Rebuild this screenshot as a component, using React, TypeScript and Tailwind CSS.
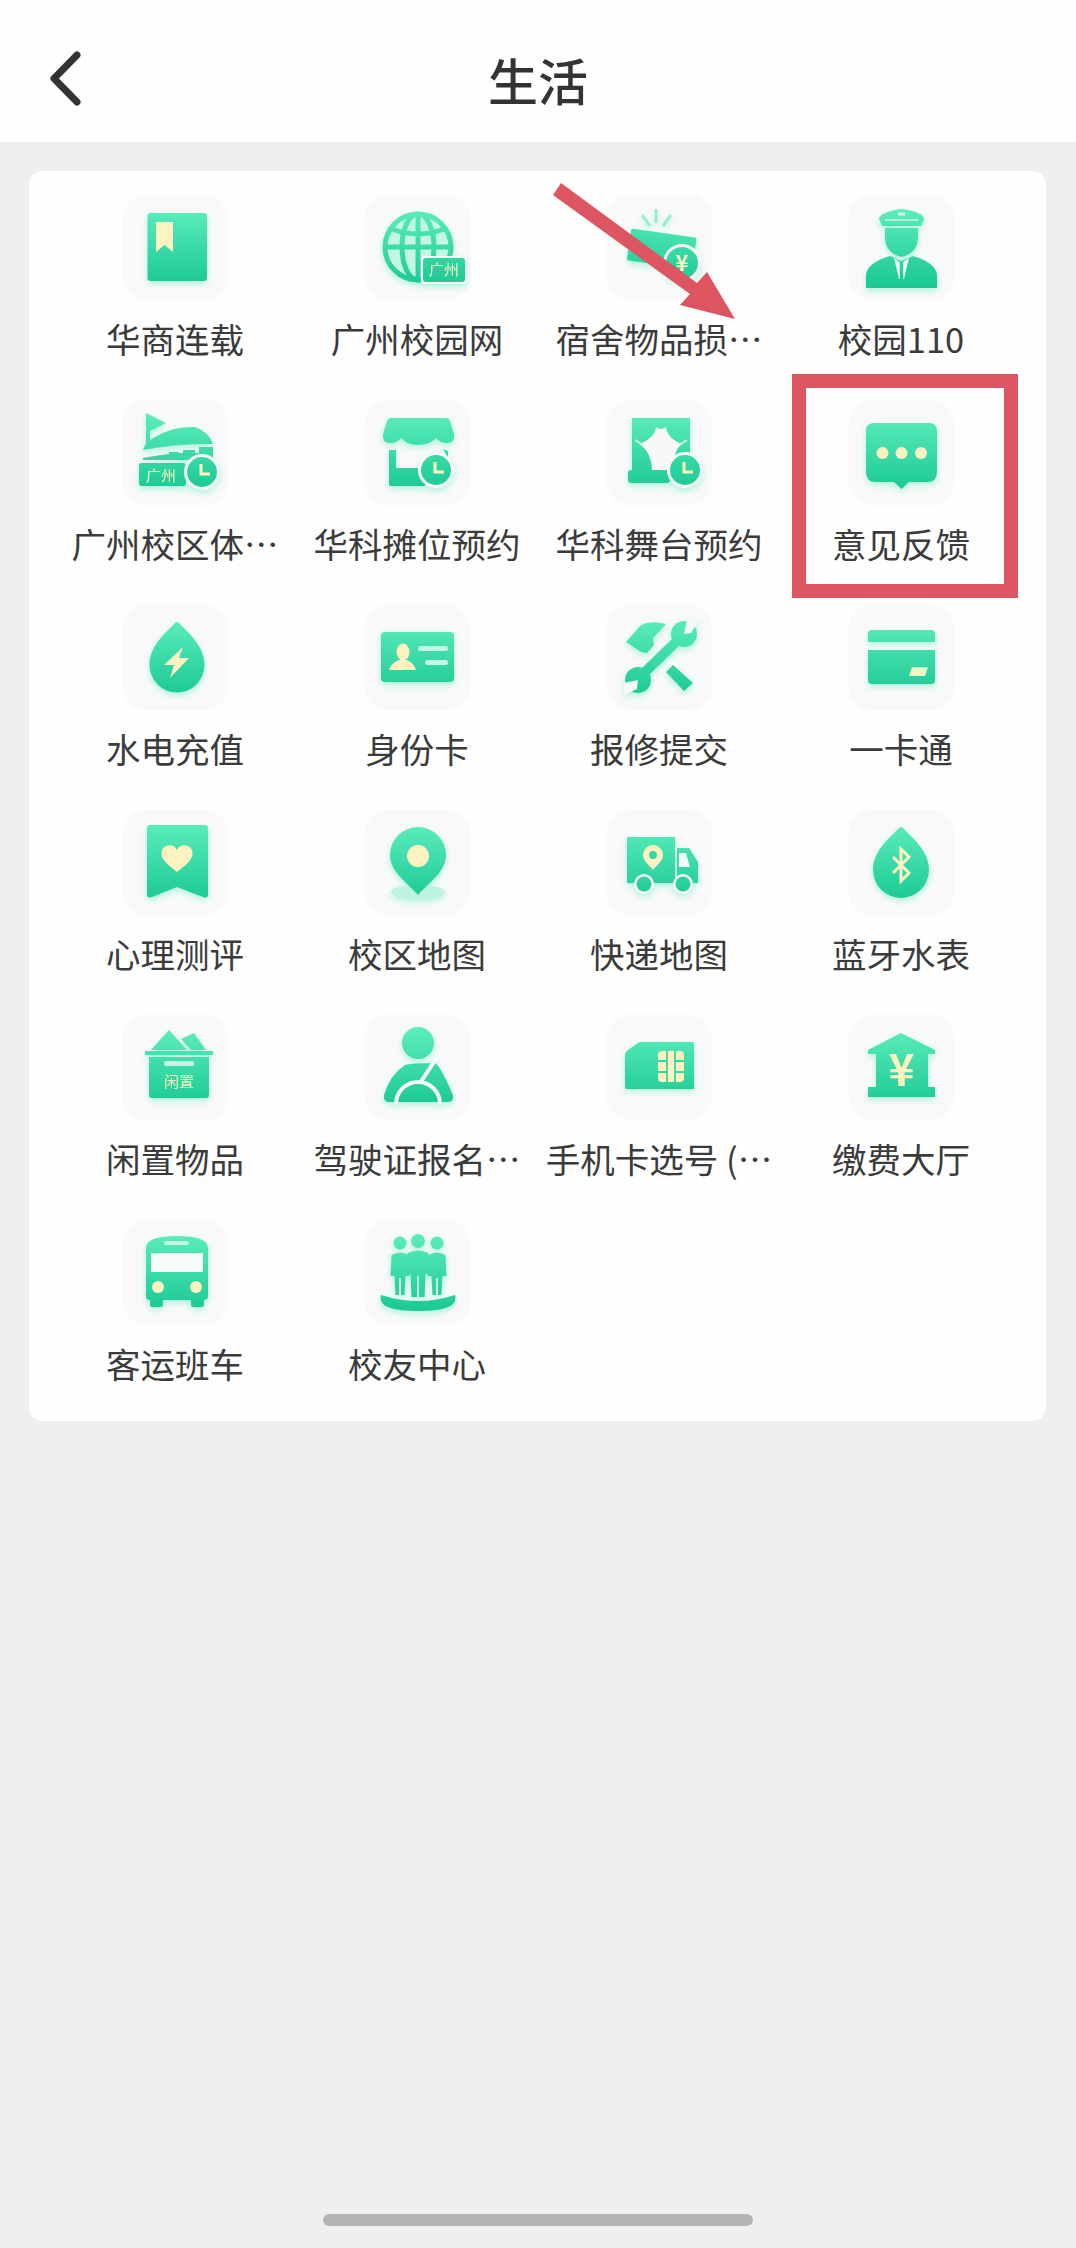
import React from "react";

const C = "#fdf3c0";
const T = "#f8f8f9";
const G = "url(#g)";
const F = '"Noto Sans CJK SC", "Noto Sans", sans-serif';

const Clock = ({ x, y, r = 15 }: { x: number; y: number; r?: number }) => (
  <g>
    <circle cx={x} cy={y} r={r + 3} fill={T} />
    <circle cx={x} cy={y} r={r} fill={G} />
    <path d={`M${x - 1} ${y - 8}V${y + 2}H${x + 8}`} fill="none" stroke={C} strokeWidth={3} />
  </g>
);

const Drop = ({ x, t, r }: { x: number; t: number; r: number }) => (
  <path
    d={`M${x - 2} ${t + 1}Q${x} ${t - 1} ${x + 2} ${t + 1}C${x + 10} ${t + 10} ${x + r} ${t + 23} ${x + r} ${t + 43}A${r} ${r} 0 0 1 ${x - r} ${t + 43}C${x - r} ${t + 23} ${x - 10} ${t + 10} ${x - 2} ${t + 1}Z`}
    fill={G}
  />
);

const Person = ({ c, t, b, w }: { c: number; t: number; b: number; w: number }) => (
  <path
    d={`M${c - w} ${t + 3}Q${c} ${t - 2} ${c + w} ${t + 3}L${c + w + 1} ${t + 24}L${c + w - 3} ${t + 24}L${c + w - 4} ${b}H${c + 1}V${t + 26}H${c - 1}V${b}H${c - w + 4}L${c - w + 3} ${t + 24}L${c - w - 1} ${t + 24}Z`}
    fill={G}
  />
);

const icons: Record<string, React.ReactNode> = {
  book: (
    <g>
      <rect x="24.5" y="18" width="59.5" height="68" rx="3" fill={G} />
      <path d="M33 27H50V57L41.5 50L33 57Z" fill={C} />
    </g>
  ),
  globe: (
    <g>
      <circle cx="53" cy="52" r="33" fill="#c5f5e3" stroke={G} strokeWidth="5" />
      <ellipse cx="53" cy="52" rx="16" ry="33" fill="none" stroke={G} strokeWidth="5" />
      <path d="M53 19V85M20 52H86M27 34Q53 44 79 34" fill="none" stroke={G} strokeWidth="5" />
      <rect x="56" y="61" width="46" height="28" rx="4" fill={T} />
      <rect x="58" y="63" width="42" height="24" rx="3" fill={G} />
      <text x="79" y="80" textAnchor="middle" fontSize="15" fill={C} fontFamily={F}>广州</text>
    </g>
  ),
  money: (
    <g>
      <path d="M49 14V28M35 20L43 31M64 20L56 31" stroke="#9bedd0" strokeWidth="3" fill="none" />
      <rect x="22" y="38" width="66" height="32" rx="2" fill={G} transform="rotate(8 55 52)" />
      <circle cx="75" cy="68" r="19" fill={T} />
      <circle cx="75" cy="68" r="16" fill={G} />
      <text x="75" y="76" textAnchor="middle" fontSize="22" fontWeight="700" fill={C} fontFamily={F}>¥</text>
    </g>
  ),
  officer: (
    <g>
      <path d="M30 24Q31 17 52.5 14Q74 17 75 24L72 31H33Z" fill={G} />
      <path d="M36 25H69" stroke="#d3f7e9" strokeWidth="1.5" />
      <path d="M49 19H56" stroke="#d3f7e9" strokeWidth="3" />
      <path d="M36 33H69V42Q69 58 52.5 62Q36 58 36 42Z" fill={G} />
      <path d="M17 93V80Q18 68 41 61L52.5 66L64 61Q87 68 88 80V93Z" fill={G} />
      <path d="M45 63L52.5 68L60 63L55 84H50Z" fill="#eafbf4" />
      <path d="M52.5 67V84" stroke={G} strokeWidth="3.5" />
    </g>
  ),
  stadium: (
    <g>
      <path d="M23 13L43 23L27 31V44H23Z" fill={G} />
      <path d="M20 50Q22 42 32 37Q50 26 72 27Q86 32 90 44Q55 43 20 50Z" fill={G} />
      <path d="M20 58Q40 54 58 53H90V60H20Z" fill={G} />
      <path d="M76 47H90V56H76ZM60 50H72V56H60ZM46 52H56V56H46Z" fill={G} />
      <rect x="16" y="63" width="47" height="23" rx="3" fill={G} />
      <text x="38" y="81" textAnchor="middle" fontSize="15" fill={C} fontFamily={F}>广州</text>
      <Clock x={79} y={72} />
    </g>
  ),
  shop: (
    <g>
      <path d="M26 18H81Q84 18 85 21L89 34Q90 43 82 43Q75 43 71 38Q65 45 53 45Q42 45 36 38Q32 43 25 43Q17 43 18 34L22 21Q23 18 26 18Z" fill={G} />
      <path d="M24 50H31V68H60V86H26Q24 86 24 84Z" fill={G} />
      <path d="M78 49L83 51V58Z" fill={G} />
      <Clock x={71} y={70} />
    </g>
  ),
  stage: (
    <g>
      <path d="M25 18H83V70H25Z" fill={G} />
      <path d="M49 27Q54 31 59 27Q60 38 75 44Q66 50 66 72H45Q45 52 32 44Q48 38 49 27Z" fill={T} />
      <path d="M28 40L36 45M80 40L72 45" stroke="#c5f5e3" strokeWidth="2" />
      <rect x="21" y="70" width="42" height="13" rx="3" fill={G} />
      <Clock x={78} y={70} />
    </g>
  ),
  chat: (
    <g>
      <path d="M25 23H80Q88 23 88 31V72Q88 82 78 82H60L52.5 89L45 82H27Q17 82 17 72V31Q17 23 25 23Z" fill={G} />
      <circle cx="33.5" cy="53" r="6" fill={C} />
      <circle cx="52.5" cy="53" r="6" fill={C} />
      <circle cx="72" cy="53" r="6" fill={C} />
    </g>
  ),
  bolt: (
    <g>
      <Drop x={54} t={17} r={27.5} />
      <path d="M60 42L41 60H51L47 73L66 53H56Z" fill={C} />
    </g>
  ),
  id: (
    <g>
      <rect x="16" y="27" width="73" height="50" rx="4" fill={G} />
      <ellipse cx="38" cy="47" rx="6.5" ry="8.5" fill={C} />
      <path d="M24 65Q26 58 34 55H42Q49 58 51 65Z" fill={C} />
      <rect x="53" y="41" width="30" height="5" rx="2.5" fill="#c5f5e3" />
      <rect x="60" y="55" width="23" height="5" rx="2.5" fill="#c5f5e3" />
    </g>
  ),
  tools: (
    <g>
      <path d="M19 37L34 20Q44 15 59 19L46 33L47 40L40 48L34 47Z" fill={G} />
      <path d="M66 60L86 78L77 86L59 67Z" fill={G} />
      <path d="M38 67L70 36" stroke={G} strokeWidth="10" />
      <circle cx="77" cy="29" r="13" fill={G} />
      <path d="M77 29L80 15H92L84 28Z" fill={T} />
      <circle cx="31" cy="75" r="13" fill={G} />
      <path d="M31 75L17 78V90L30 84Z" fill={T} />
    </g>
  ),
  card: (
    <g>
      <path d="M23 25H82Q86 25 86 29V37H19V29Q19 25 23 25Z" fill={G} />
      <path d="M19 45H86V75Q86 79 82 79H23Q19 79 19 75Z" fill={G} />
      <path d="M63 62H79L76 71H60Z" fill={C} />
    </g>
  ),
  heart: (
    <g>
      <path d="M27 15H82Q85 15 85 18V84Q85 89 80 87L54 77L29 87Q24 89 24 84V18Q24 15 27 15Z" fill={G} />
      <path d="M54 62C45 55 38.5 50 38.5 43C38.5 35 50 32 54 40C58 32 69.5 35 69.5 43C69.5 50 63 55 54 62Z" fill={C} />
    </g>
  ),
  pin: (
    <g>
      <ellipse cx="53" cy="82" rx="27" ry="7" fill="#bdf3df" />
      <path d="M53 85C42 72 25 62 25 45A28 28 0 0 1 81 45C81 62 64 72 53 85Z" fill={G} />
      <circle cx="53" cy="46" r="11" fill={C} />
    </g>
  ),
  truck: (
    <g>
      <rect x="20" y="27" width="48" height="46" fill={G} />
      <path d="M70 38H82L91 52V73H70Z" fill={G} />
      <path d="M72 43H79L83 57H72Z" fill="#f1fbf7" />
      <path d="M46 60C40 53 36 50 36 45A10 10 0 0 1 56 45C56 50 52 53 46 60Z" fill={C} />
      <circle cx="46" cy="45" r="4" fill="#35d6a2" />
      <circle cx="37" cy="74" r="10" fill={T} />
      <circle cx="76" cy="74" r="10" fill={T} />
      <circle cx="37" cy="74" r="7.5" fill={G} />
      <circle cx="76" cy="74" r="7.5" fill={G} />
    </g>
  ),
  blue: (
    <g>
      <Drop x={52} t={17} r={28} />
      <path d="M44 47L60 63L52 71V39L60 47L44 63" fill="none" stroke={C} strokeWidth="3" />
    </g>
  ),
  box: (
    <g>
      <path d="M28 35L46 15L64 35Z" fill={G} />
      <path d="M58 24L71 18L83 35H68Z" fill={G} />
      <rect x="22" y="36" width="68" height="4" rx="1" fill={G} />
      <path d="M26 42H86V80Q86 83 83 83H29Q26 83 26 80Z" fill={G} />
      <rect x="41" y="46" width="30" height="5" rx="2" fill="#c5f5e3" />
      <text x="56" y="72" textAnchor="middle" fontSize="15" fill={C} fontFamily={F}>闲置</text>
    </g>
  ),
  driver: (
    <g>
      <circle cx="53" cy="28" r="16" fill={G} />
      <path d="M24 87Q18 87 19 80Q25 60 40 50Q46 48 70 48Q75 50 88 80Q89 87 83 87Z" fill={G} />
      <path d="M71 44L55 68" stroke={T} strokeWidth="4" />
      <path d="M31 89A22 22 0 0 1 75 89" fill="none" stroke={T} strokeWidth="4" />
    </g>
  ),
  sim: (
    <g>
      <path d="M34 27H85Q87 27 87 29V74H20Q18 74 18 72V40Q18 37 21 35L31 28Q33 27 34 27Z" fill={G} />
      <rect x="51" y="36" width="26" height="31" rx="4" fill={C} />
      <path d="M60 36V67M68 36V67M51 46H60M68 46H77M51 57H60M68 57H77" stroke="#35d6a2" strokeWidth="1.8" />
    </g>
  ),
  bank: (
    <g>
      <path d="M52 18L86 35V39H79V72H86V82H19V72H27V39H19V35Z" fill={G} />
      <text x="52.5" y="71" textAnchor="middle" fontSize="44" fontWeight="700" fill={C} fontFamily={F}>¥</text>
    </g>
  ),
  bus: (
    <g>
      <path d="M23 28Q23 16 54 16Q85 16 85 28V76Q85 80 81 80H27Q23 80 23 76Z" fill={G} />
      <rect x="27" y="78" width="13" height="9" rx="2" fill={G} />
      <rect x="68" y="78" width="13" height="9" rx="2" fill={G} />
      <rect x="28" y="33" width="52" height="19" fill="#f4fbf8" />
      <rect x="41" y="21" width="25" height="4" rx="2" fill="#c5f5e3" />
      <circle cx="35" cy="67" r="6" fill={C} />
      <circle cx="73" cy="67" r="6" fill={C} />
    </g>
  ),
  people: (
    <g>
      <circle cx="35" cy="23" r="6.5" fill={G} />
      <circle cx="53" cy="21" r="7" fill={G} />
      <circle cx="72" cy="23" r="6.5" fill={G} />
      <Person c={35} t={32} b={75} w={8.5} />
      <Person c={53} t={30} b={77} w={10.5} />
      <Person c={72} t={32} b={75} w={8.5} />
      <path d="M16 75Q53 87 90 75Q95 91 53 91Q11 91 16 75Z" fill={G} />
    </g>
  ),
};

const items: [string, string][] = [
  ["book", "华商连载"],
  ["globe", "广州校园网"],
  ["money", "宿舍物品损⋯"],
  ["officer", "校园110"],
  ["stadium", "广州校区体⋯"],
  ["shop", "华科摊位预约"],
  ["stage", "华科舞台预约"],
  ["chat", "意见反馈"],
  ["bolt", "水电充值"],
  ["id", "身份卡"],
  ["tools", "报修提交"],
  ["card", "一卡通"],
  ["heart", "心理测评"],
  ["pin", "校区地图"],
  ["truck", "快递地图"],
  ["blue", "蓝牙水表"],
  ["box", "闲置物品"],
  ["driver", "驾驶证报名⋯"],
  ["sim", "手机卡选号 (⋯"],
  ["bank", "缴费大厅"],
  ["bus", "客运班车"],
  ["people", "校友中心"],
];

function Tile({ name, label }: { name: string; label: string }) {
  return (
    <div className="flex flex-col items-center">
      <div className="h-[105px] w-[105px] rounded-[24px] bg-[#f9f9fa] shadow-[0_0_3px_#f9f9fa]">
        <svg viewBox="0 0 105 105" className="h-[105px] w-[105px] drop-shadow-[0_3px_3px_rgba(70,235,180,0.4)]">
          <defs>
            <linearGradient id="g" gradientUnits="userSpaceOnUse" x1="0" y1="14" x2="0" y2="90">
              <stop offset="0" stopColor="#5cecbd" />
              <stop offset="1" stopColor="#1bc994" />
            </linearGradient>
          </defs>
          {icons[name]}
        </svg>
      </div>
      <div className="mt-[14px] h-12 whitespace-nowrap text-[34.5px] leading-[48px] text-[#3b3b3b]">{label}</div>
    </div>
  );
}

export default function App() {
  return (
    <div
      className="relative flex h-[2248px] w-[1076px] flex-col overflow-hidden bg-[#efefef]"
      style={{ fontFamily: F }}
    >
      <header className="grid h-[142px] grid-cols-[1fr_auto_1fr] items-center bg-[#fefefe] pt-4">
        <svg viewBox="0 0 40 60" className="ml-[46px] h-[60px] w-10">
          <path d="M31 6L8 29.5L31 53" fill="none" stroke="#333333" strokeWidth="7" strokeLinecap="round" strokeLinejoin="round" />
        </svg>
        <h1 className="text-[50px] font-medium leading-none text-[#333333]">生活</h1>
        <div />
      </header>

      <main className="mx-[29px] mt-[29px] grid h-[1250px] w-[1017px] grid-cols-[repeat(4,242px)] content-start gap-y-[38px] rounded-[14px] bg-[#fefefe] pb-8 pl-[25px] pr-[24px] pt-6">
        {items.map(([n, l]) => (
          <Tile key={n} name={n} label={l} />
        ))}
      </main>

      <div className="mb-[22px] mt-auto h-3 w-[430px] self-center rounded-[6px] bg-[#b4b4b4]" />

      <div className="absolute left-[792px] top-[374px] h-[224px] w-[226px] border-[14px] border-[#dc5560]" />
      <svg className="absolute left-[540px] top-[170px]" width="210" height="160" viewBox="540 170 210 160">
        <polygon points="553,195 561,183 697,283 707,272 735,319 680,305 690,294" fill="#dc5560" />
      </svg>
    </div>
  );
}
